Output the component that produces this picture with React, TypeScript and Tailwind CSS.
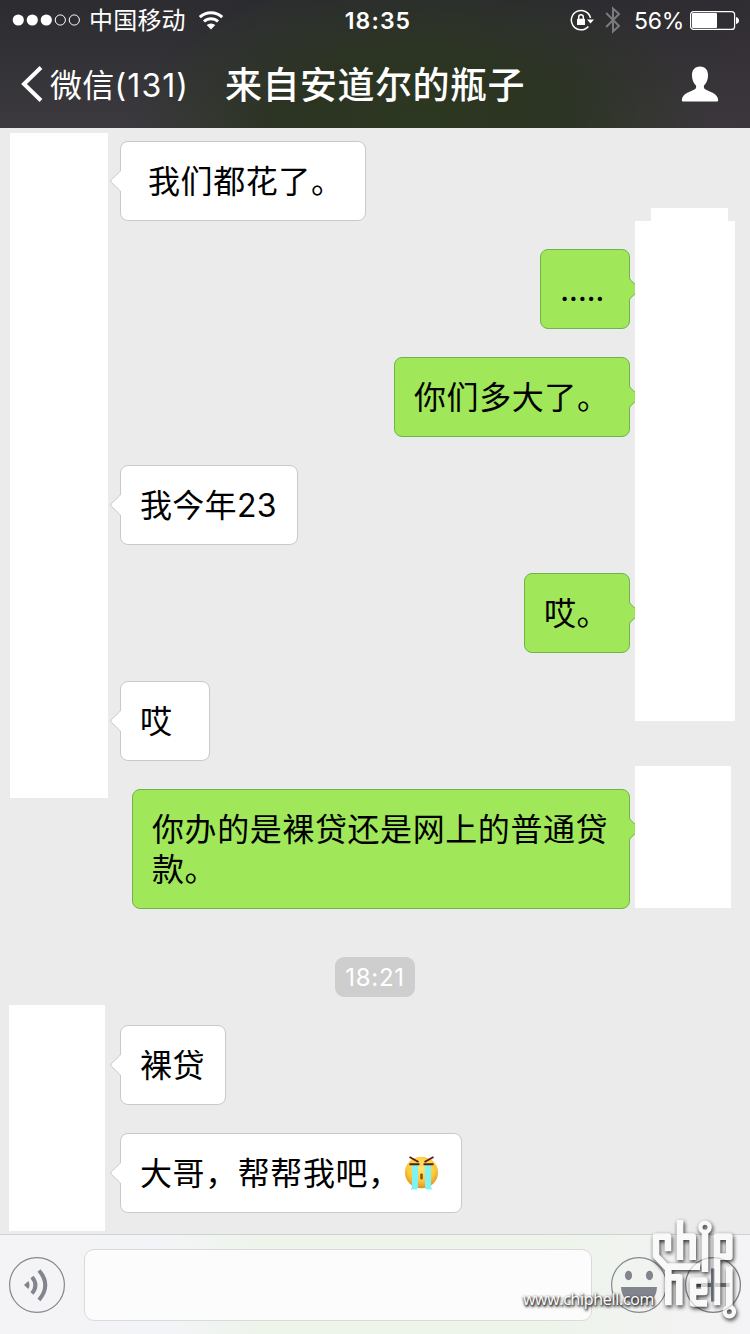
import React from "react";

type Message = { text: string; mine?: boolean; width: string; pad?: string; tracking?: string; tears?: boolean };

const earlier: Message[] = [
  { text: "我们都花了。", width: "w-[246px]", pad: "pl-[27px]" },
  { text: ".....", mine: true, width: "w-[90px]", tracking: "tracking-[-0.4px]" },
  { text: "你们多大了。", mine: true, width: "w-[236px]" },
  { text: "我今年23", width: "w-[178px]", tracking: "tracking-[0.3px]" },
  { text: "哎。", mine: true, width: "w-[106px]" },
  { text: "哎", width: "w-[90px]" },
  { text: "你办的是裸贷还是网上的普通贷款。", mine: true, width: "w-[498px]" },
];

const later: Message[] = [
  { text: "裸贷", width: "w-[106px]" },
  { text: "大哥，帮帮我吧，", width: "w-[342px]", tears: true },
];

function TearsFace() {
  return (
    <svg className="ml-[2px] mt-[1px] h-9 w-9 shrink-0" viewBox="0 0 36 36">
      <defs>
        <radialGradient id="face" cx="50%" cy="35%" r="65%">
          <stop offset="0" stopColor="#ffe873" />
          <stop offset="0.65" stopColor="#fbc93a" />
          <stop offset="1" stopColor="#e28f1c" />
        </radialGradient>
      </defs>
      <ellipse cx="18.500" cy="17.500" rx="16.500" ry="15.800" fill="url(#face)" />
      <path d="M9 10h6v22q0 2.500-2 2.500H7.500Q9 33 9 31zM22 10h6v21q0 2 1.500 3.500H24q-2 0-2-2.500z" fill="#7df3f5" />
      <path d="M6.500 2l9 5M30.500 2l-9 5M6.500 9.300h10M20.500 9.300h10" stroke="#5a1d14" strokeWidth="1.900" fill="none" />
      <rect x="17.300" y="18.500" width="2.400" height="6" rx="1" fill="#8a4510" />
    </svg>
  );
}

function Bubble({ text, mine, width, pad, tracking, tears }: Message) {
  return (
    <div
      className={`relative flex rounded-[8px] border pt-[20px] pb-[18px] text-[32px] leading-[40px] text-black ${width} ${pad ?? "pl-[19px]"} ${
        tracking ?? "tracking-[0.58px]"
      } ${mine ? "self-end border-[#6fb44b] bg-[#a0e75a]" : "self-start border-[#c9c9c9] bg-white"}`}
    >
      <span className={tears ? "whitespace-nowrap" : "w-full"}>{text}</span>
      {tears && <TearsFace />}
      {mine ? (
        <svg className="absolute top-[28px] -right-[11px] h-[22px] w-[11px]" viewBox="0 0 11 22">
          <path d="M0 0L.5 0L1.500 2L10 11L1.500 20L.5 22H0Z" fill="#a0e75a" />
          <path d="M.5 0Q.5 1 1.500 2L9.500 9.500Q11 11 9.500 12.500L1.500 20Q.5 21 .5 22" fill="#a0e75a" stroke="#6fb44b" />
        </svg>
      ) : (
        <svg className="absolute top-[28px] -left-[11px] h-[22px] w-[11px]" viewBox="0 0 11 22">
          <path d="M11 0L10.500 0L9.500 2L1 11L9.500 20L10.500 22H11Z" fill="#fff" />
          <path d="M10.500 0Q10.500 1 9.500 2L1.500 9.500Q0 11 1.500 12.500L9.500 20Q10.500 21 10.500 22" fill="#fff" stroke="#c9c9c9" />
        </svg>
      )}
    </div>
  );
}

function StatusBar() {
  return (
    <div className="grid h-10 grid-cols-[1fr_auto_1fr] items-center text-[24px] leading-10">
      <div className="flex items-center pl-[12px]">
        <svg className="h-3 w-[70px]" viewBox="0 0 70 12">
          <g fill="#fff">
            <circle cx="6.300" cy="6" r="5.600" />
            <circle cx="20.300" cy="6" r="5.600" />
            <circle cx="34.300" cy="6" r="5.600" />
          </g>
          <g fill="none" stroke="#fff">
            <circle cx="48.300" cy="6" r="5.100" />
            <circle cx="62.300" cy="6" r="5.100" />
          </g>
        </svg>
        <span className="ml-[7px] pt-[2px] leading-[38px] tracking-[0.2px]">中国移动</span>
        <svg className="ml-[12px] h-5 w-[26px]" viewBox="0 0 26 20">
          <g fill="none" stroke="#fff" strokeWidth="3">
            <path d="M1.800 7.200a16.300 16.300 0 0 1 22.400 0" />
            <path d="M6 11.500a10.300 10.300 0 0 1 14 0" />
          </g>
          <path d="M13 19.500l-4.300-4.400a6.300 6.300 0 0 1 8.600 0z" fill="#fff" />
        </svg>
      </div>
      <div className="translate-x-[3px] pt-[2px] text-[23px] leading-[38px] font-semibold tracking-[1.1px]">18:35</div>
      <div className="flex items-center justify-end pr-[11px]">
        <svg className="h-6 w-6" viewBox="0 0 24 24">
          <path d="M20.500 10A9.700 9.700 0 1 0 18.400 18.500" fill="none" stroke="#fff" strokeWidth="1.500" />
          <path d="M17 11.500h7l-3.500 4z" fill="#fff" />
          <rect x="7" y="10.800" width="8" height="6.200" rx=".6" fill="#fff" />
          <path d="M8.700 11V9a2.300 2.300 0 0 1 4.600 0v2" fill="none" stroke="#fff" strokeWidth="1.500" />
        </svg>
        <svg className="ml-[11px] h-7 w-4" viewBox="0 0 16 28">
          <path d="M1.200 7L14 20l-6 5.500V2.500L14 8 1.200 21" fill="none" stroke="#7b7b7c" strokeWidth="2" />
        </svg>
        <span className="ml-[13px] pt-[2px] text-[23px] leading-[38px] tracking-[-0.3px]">56%</span>
        <svg className="ml-[6px] h-[19px] w-[49px]" viewBox="0 0 49 19">
          <rect x=".6" y=".6" width="44" height="17.800" rx="3" fill="none" stroke="#fff" strokeWidth="1.200" />
          <rect x="2" y="2" width="25" height="15" rx="1" fill="#fff" />
          <path d="M46 6q3 1 3 3.500T46 13z" fill="#fff" />
        </svg>
      </div>
    </div>
  );
}

function NavBar() {
  return (
    <div className="grid h-[88px] grid-cols-[1fr_auto_1fr] items-center">
      <div className="flex items-center pl-[20px]">
        <svg className="h-[36px] w-[24px]" viewBox="0 0 24 36">
          <path d="M21 1.500L4 18l17 16.500" fill="none" stroke="#fff" strokeWidth="4" />
        </svg>
        <span className="ml-[6px] pt-[3px] text-[32px] tracking-[0.3px] whitespace-nowrap">
          微信<span className="tracking-[1.050px]">(131)</span>
        </span>
      </div>
      <h1 className="pt-[4px] text-[37px] font-medium tracking-[0.5px]">来自安道尔的瓶子</h1>
      <div className="flex justify-end pr-[31px]">
        <svg className="h-[36px] w-[38px]" viewBox="0 0 38 36">
          <path
            d="M19 .5c5.500 0 8.300 4 8 9.500-.2 4-1.500 7-3.800 9.300-.6.700-.4 2.800.3 3.500C27 25.500 37 27 37.200 34.200q0 1.300-1.200 1.300H2q-1.200 0-1.200-1.300C1 27 11 25.500 14.500 22.800c.7-.7.9-2.800.3-3.500C12.500 17 11.200 14 11 10 10.700 4.500 13.500.5 19 .5z"
            fill="#fff"
          />
        </svg>
      </div>
    </div>
  );
}

function ChipLogo() {
  return (
    <svg className="absolute -top-[21px] left-[645px] h-[112px] w-[98px] opacity-95 drop-shadow-[1px_2px_2px_rgba(0,0,0,0.85)]" viewBox="0 0 294 336">
      <g fill="none" stroke="#fafafa" strokeWidth="20" strokeLinejoin="round">
        <path d="M69 112V68H33V126L70 165V274" />
        <path d="M62 158H165" />
        <path d="M70 190H103V274" />
        <path d="M105 18V138M105 68H143V138" />
        <path d="M180 52V174" />
        <path d="M216 274V68H253V128H218" />
        <path d="M186 268H144V200H178V234H150" />
        <path d="M253 158V282" />
        <circle cx="180" cy="40" r="14" strokeWidth="13" />
        <circle cx="253" cy="293" r="14" strokeWidth="13" />
      </g>
    </svg>
  );
}

function InputBar() {
  return (
    <footer className="relative flex h-[100px] items-start border-t border-[#d1d1d2] bg-[linear-gradient(90deg,#f4f4f6_0%,#f3f4f7_22%,#edf4e9_36%,#edf4e9_72%,#f1f3f0_86%,#f4f3f5_100%)]">
      <svg className="mt-[22px] ml-[9px] h-14 w-14" viewBox="0 0 56 56">
        <circle cx="28" cy="28" r="27.400" fill="none" stroke="#858891" strokeWidth="1.200" />
        <path d="M15 28l4.300-4q2.500 4 0 8z" fill="#82858d" />
        <g fill="none" stroke="#82858d" strokeWidth="4">
          <path d="M23 20q6.800 8 0 16.500" />
          <path d="M30 13.500q12.500 14.500 0 29.500" />
        </g>
      </svg>
      <div className="mt-[14px] ml-[19px] h-[72px] w-[508px] rounded-[10px] border border-[#d9dadb] bg-[#fcfcfc]" />
      <svg className="mt-[22px] ml-[19px] h-14 w-14" viewBox="0 0 56 56">
        <circle cx="28" cy="28" r="27.400" fill="none" stroke="#858891" strokeWidth="1.200" />
        <ellipse cx="17.500" cy="18.500" rx="3.600" ry="4.700" fill="#82858d" />
        <ellipse cx="38.500" cy="18.500" rx="3.600" ry="4.700" fill="#82858d" />
        <path d="M10 30h36c-.5 10-5 16.500-18 16.500S10.500 40 10 30z" fill="#82858d" />
      </svg>
      <svg className="mt-[22px] ml-[18px] h-14 w-14" viewBox="0 0 56 56">
        <circle cx="28" cy="28" r="27.400" fill="none" stroke="#858891" strokeWidth="1.200" />
        <path d="M28 11.500v33M11.500 28h33" stroke="#747983" strokeWidth="4" />
      </svg>
      <ChipLogo />
      <svg className="absolute top-[22px] left-[685px] h-14 w-14 opacity-25" viewBox="0 0 56 56">
        <circle cx="28" cy="28" r="27.400" fill="none" stroke="#5f646d" strokeWidth="1.200" />
        <path d="M28 11.500v33M11.500 28h33" stroke="#5f646d" strokeWidth="4" />
      </svg>
      <div className="absolute top-[53px] left-[523px] font-['Open_Sans',sans-serif] text-[16px] leading-[22px] font-medium tracking-[-0.3px] whitespace-nowrap text-white [text-shadow:1px_1px_2px_#333,0_1px_3px_#444,1px_2px_3px_#555]">
        www.chiphell.com
      </div>
    </footer>
  );
}

export default function App() {
  return (
    <div className="flex h-[1334px] w-[750px] flex-col overflow-hidden bg-[#ebebeb] font-['Inter','Noto_Sans_CJK_SC',sans-serif]">
      <header className="h-[128px] shrink-0 bg-[radial-gradient(ellipse_290px_150px_at_420px_120px,#2d3822_0%,#2b3422_45%,transparent_100%),linear-gradient(90deg,transparent_70%,#3b30354d_100%),linear-gradient(180deg,#2b2b30_0%,#3c3a3f_100%)] text-white">
        <StatusBar />
        <NavBar />
      </header>
      <main className="flex h-[1106px] shrink-0">
        <div className="flex w-[120px] flex-col">
          <div className="mt-[5px] ml-[10px] h-[665px] w-[98px] bg-white" />
          <div className="mt-[207px] ml-[9px] h-[226px] w-[96px] bg-white" />
        </div>
        <div className="flex w-[510px] flex-col gap-7 pt-[13px]">
          {earlier.map((m, i) => (
            <Bubble key={i} {...m} />
          ))}
          <time className="mt-5 ml-[215px] flex h-10 w-20 items-center justify-center rounded-[9px] bg-[#cecece] pt-[2px] text-[24px] tracking-[0.7px] text-white">18:21</time>
          {later.map((m, i) => (
            <Bubble key={i} {...m} />
          ))}
        </div>
        <div className="z-10 flex w-[120px] flex-col pl-[5px]">
          <div className="mt-[80px] ml-4 h-[13px] w-[77px] bg-white" />
          <div className="h-[500px] w-[100px] bg-white" />
          <div className="mt-[45px] h-[142px] w-24 bg-white" />
        </div>
      </main>
      <InputBar />
    </div>
  );
}
